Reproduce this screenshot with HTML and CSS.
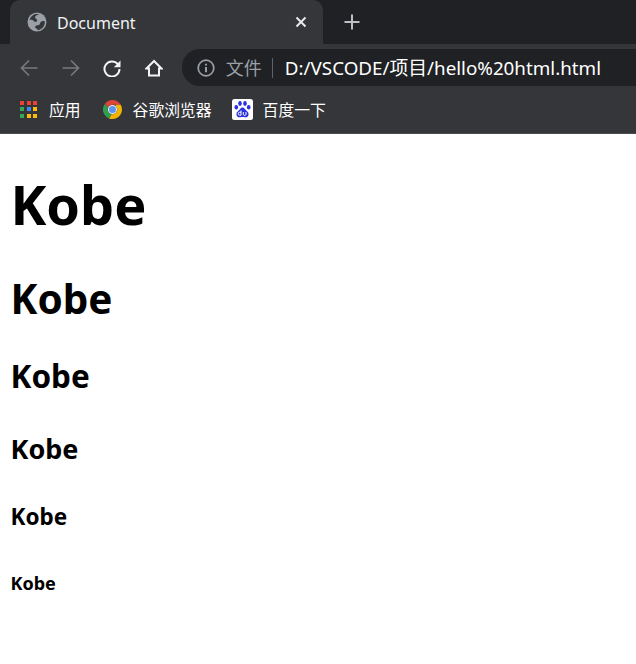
FILE: index.html
```html
<!DOCTYPE html>
<html lang="en">
<head>
    <meta charset="UTF-8">
    <meta name="viewport" content="width=device-width, initial-scale=1.0">
    <title>Document</title>
    <link rel="stylesheet" href="styles.css">
</head>
<body>
    <!-- Browser chrome -->
    <div class="tab-strip">
        <div class="tab">
            <svg class="tab-globe" width="20" height="20" viewBox="0 0 20 20">
                <circle cx="10" cy="10" r="9.500" fill="#9aa0a6"/>
                <path d="M2.500 8c2-.5 3.500 0 4.500 1.300 1 1.200 2.500 1 3-.3.500-1.200-.3-2-1.300-2.500-.8-.5-.8-1.800.2-2.800 1-.8 2-1.200 3.300-1.200C9 1.200 4.500 2.500 2.500 8z" fill="#35363a"/>
                <path d="M17.800 9.500c-1.600-.7-3-.5-4 .6-1 1.100-.6 2.300-2 3-1.400.7-3 .3-3.600 1.400-.4.900.3 1.700 1.300 2 .9.300 1.200 1 1 1.700 4-.3 7.800-4 7.300-8.700z" fill="#35363a"/>
            </svg>
            <span class="tab-title">Document</span>
            <svg class="tab-close" width="12" height="12" viewBox="0 0 12 12">
                <path d="M1.500 1.500l9 9M10.500 1.500l-9 9" stroke="#e8eaed" stroke-width="2"/>
            </svg>
        </div>
        <svg class="new-tab" width="16" height="16" viewBox="0 0 16 16">
            <path d="M8 0.500v15M0.500 8h15" stroke="#bdc1c6" stroke-width="2"/>
        </svg>
    </div>

    <div class="toolbar">
        <svg class="nav-icon" width="18" height="18" viewBox="0 0 18 18" fill="none" stroke="#77797d" stroke-width="1.700">
            <path d="M17.500 9H1.500M9 1.500L1.500 9 9 16.500"/>
        </svg>
        <svg class="nav-icon" width="18" height="18" viewBox="0 0 18 18" fill="none" stroke="#77797d" stroke-width="1.700">
            <path d="M.5 9h16M9 1.500L16.500 9 9 16.500"/>
        </svg>
        <svg class="nav-icon" width="18" height="18" viewBox="0 0 18 18" fill="none">
            <path d="M14.800 5.200A7.500 7.500 0 1 0 16.500 10" stroke="#f1f3f4" stroke-width="2"/>
            <path d="M17.500 1.500v6.700h-6.700z" fill="#f1f3f4"/>
        </svg>
        <svg class="nav-icon" width="18" height="18" viewBox="0 0 18 18" fill="none" stroke="#f1f3f4" stroke-width="2">
            <path d="M9 2L1.500 9.500H4v7h10v-7h2.500z"/>
        </svg>
        <div class="omnibox">
            <svg width="18" height="18" viewBox="0 0 18 18" fill="none">
                <circle cx="9" cy="9" r="7.800" stroke="#9aa0a6" stroke-width="1.700"/>
                <path d="M9 8v5.200M9 4.800v1.800" stroke="#9aa0a6" stroke-width="2"/>
            </svg>
            <span class="url-scheme">文件</span>
            <span class="url-divider"></span>
            <span class="url-text">D:/VSCODE/项目/hello%20html.html</span>
        </div>
    </div>

    <div class="bookmarks">
        <div class="bookmark bookmark-apps">
            <div class="apps-grid">
                <i class="dot-red"></i><i class="dot-red"></i><i class="dot-red"></i>
                <i class="dot-green"></i><i class="dot-blue"></i><i class="dot-orange"></i>
                <i class="dot-green"></i><i class="dot-orange"></i><i class="dot-orange"></i>
            </div>
            <span>应用</span>
        </div>
        <div class="bookmark">
            <svg width="19" height="19" viewBox="0 0 20 20">
                <path d="M10 0a10 10 0 0 1 8.660 5H10a5 5 0 0 0-4.600 3L1.900 4.100A10 10 0 0 1 10 0z" fill="#db4437"/>
                <path d="M1.900 4.100L5.400 8a5 5 0 0 0 3.500 6.900L6.500 19.400A10 10 0 0 1 1.900 4.100z" fill="#2e9e4f"/>
                <path d="M18.660 5A10 10 0 0 1 10 20H6.500l2.400-5.100A5 5 0 0 0 14.300 7.500L13 5z" fill="#f4b400"/>
                <circle cx="10" cy="10" r="4.800" fill="#f1f3f4"/>
                <circle cx="10" cy="10" r="3.700" fill="#5c94ed"/>
            </svg>
            <span>谷歌浏览器</span>
        </div>
        <div class="bookmark bookmark-baidu">
            <svg width="21" height="21" viewBox="0 0 21 21">
                <rect width="21" height="21" rx="2.500" fill="#fff"/>
                <g fill="#2932e1">
                    <ellipse cx="4.300" cy="8.200" rx="1.800" ry="2.300"/>
                    <ellipse cx="8" cy="4.500" rx="1.800" ry="2.400"/>
                    <ellipse cx="13" cy="4.500" rx="1.800" ry="2.400"/>
                    <ellipse cx="16.700" cy="8.200" rx="1.800" ry="2.300"/>
                    <path d="M10.500 8.500c-2 0-2.500 2-4 3.200-1.500 1.200-2.300 2.300-2 4 .3 2 2 2.800 4 2.500 1-.1 1.500-.3 2-.3s1 .2 2 .3c2 .3 3.700-.5 4-2.500.3-1.700-.5-2.800-2-4-1.500-1.200-2-3.200-4-3.200z"/>
                </g>
                <path d="M9 11.500v4.800M9 13.200H7.700a1.500 1.500 0 0 0 0 3H9M11.300 13v2.300c0 1.500 2.700 1.500 2.700 0V13" fill="none" stroke="#fff" stroke-width="1"/>
            </svg>
            <span>百度一下</span>
        </div>
    </div>

    <!-- Page content -->
    <div class="page">
        <h1>Kobe</h1>
        <h2>Kobe</h2>
        <h3>Kobe</h3>
        <h4>Kobe</h4>
        <h5>Kobe</h5>
        <h6>Kobe</h6>
    </div>
</body>
</html>
```

FILE: styles.css
```css
body {
    margin: 0;
    background-color: white;
    font-family: "Noto Sans", "Noto Sans CJK SC", sans-serif;
    overflow: hidden;
}

.tab-strip {
    display: flex;
    align-items: flex-end;
    height: 44px;
    padding-left: 10px;
    background-color: #202124;
}

.tab {
    display: flex;
    align-items: center;
    width: 313px;
    height: 44px;
    padding: 0 16px 0 17px;
    box-sizing: border-box;
    background-color: #35363a;
    border-radius: 10px 10px 0 0;
}

.tab-globe {
    flex: none;
}

.tab-title {
    flex: 1;
    margin: 2px 0 0 10px;
    color: #f1f3f4;
    font-size: 16px;
}

.new-tab {
    margin: 0 0 14px 21px;
}

.toolbar {
    display: flex;
    align-items: center;
    height: 47px;
    padding-left: 20px;
    background-color: #35363a;
}

.nav-icon {
    flex: none;
    margin-right: 23.7px;
}

.omnibox {
    display: flex;
    align-items: center;
    flex: 1;
    height: 37px;
    margin-left: -4.900px;
    padding-left: 15px;
    background-color: #202124;
    border-radius: 18px 0 0 18px;
}

.url-scheme {
    margin: 0 0 2px 11px;
    color: #9aa0a6;
    font-size: 18px;
}

.url-divider {
    width: 1px;
    height: 20px;
    margin: 0 12px 0 10px;
    background-color: #5f6368;
}

.url-text {
    margin-bottom: 2px;
    color: #fff;
    font-size: 18.800px;
    white-space: nowrap;
}

.bookmarks {
    display: flex;
    align-items: center;
    gap: 20px;
    height: 36px;
    padding: 0 0 6px 20px;
    background-color: #35363a;
    border-bottom: 1px solid #4a4b4f;
}

.bookmark {
    display: flex;
    align-items: center;
    gap: 11px;
    color: #fff;
    font-size: 15.800px;
}

.bookmark-apps {
    gap: 12px;
    margin-right: 2px;
}

.bookmark-baidu {
    gap: 10px;
}

.apps-grid {
    display: grid;
    grid-template-columns: repeat(3, 4px);
    grid-auto-rows: 4px;
    gap: 2.500px;
}

.dot-red { background-color: #ea4335; }
.dot-green { background-color: #34a853; }
.dot-blue { background-color: #4285f4; }
.dot-orange { background-color: #fbbc05; }

.page {
    padding: 0 0 0 10.500px;
    color: #000;
}

h1, h2, h3, h4, h5, h6 {
    margin: 0;
    font-weight: 700;
}

h1 {
    font-size: 54px;
    line-height: 76px;
    margin-top: 32px;
}

h2 {
    font-size: 40.500px;
    line-height: 58px;
    margin-top: 28px;
}

h3 {
    font-size: 31.500px;
    line-height: 44px;
    margin-top: 26px;
}

h4 {
    font-size: 27px;
    line-height: 38px;
    margin-top: 32px;
}

h5 {
    font-size: 22.500px;
    line-height: 32px;
    margin-top: 33px;
}

h6 {
    font-size: 18px;
    line-height: 26px;
    margin-top: 37px;
}
```
